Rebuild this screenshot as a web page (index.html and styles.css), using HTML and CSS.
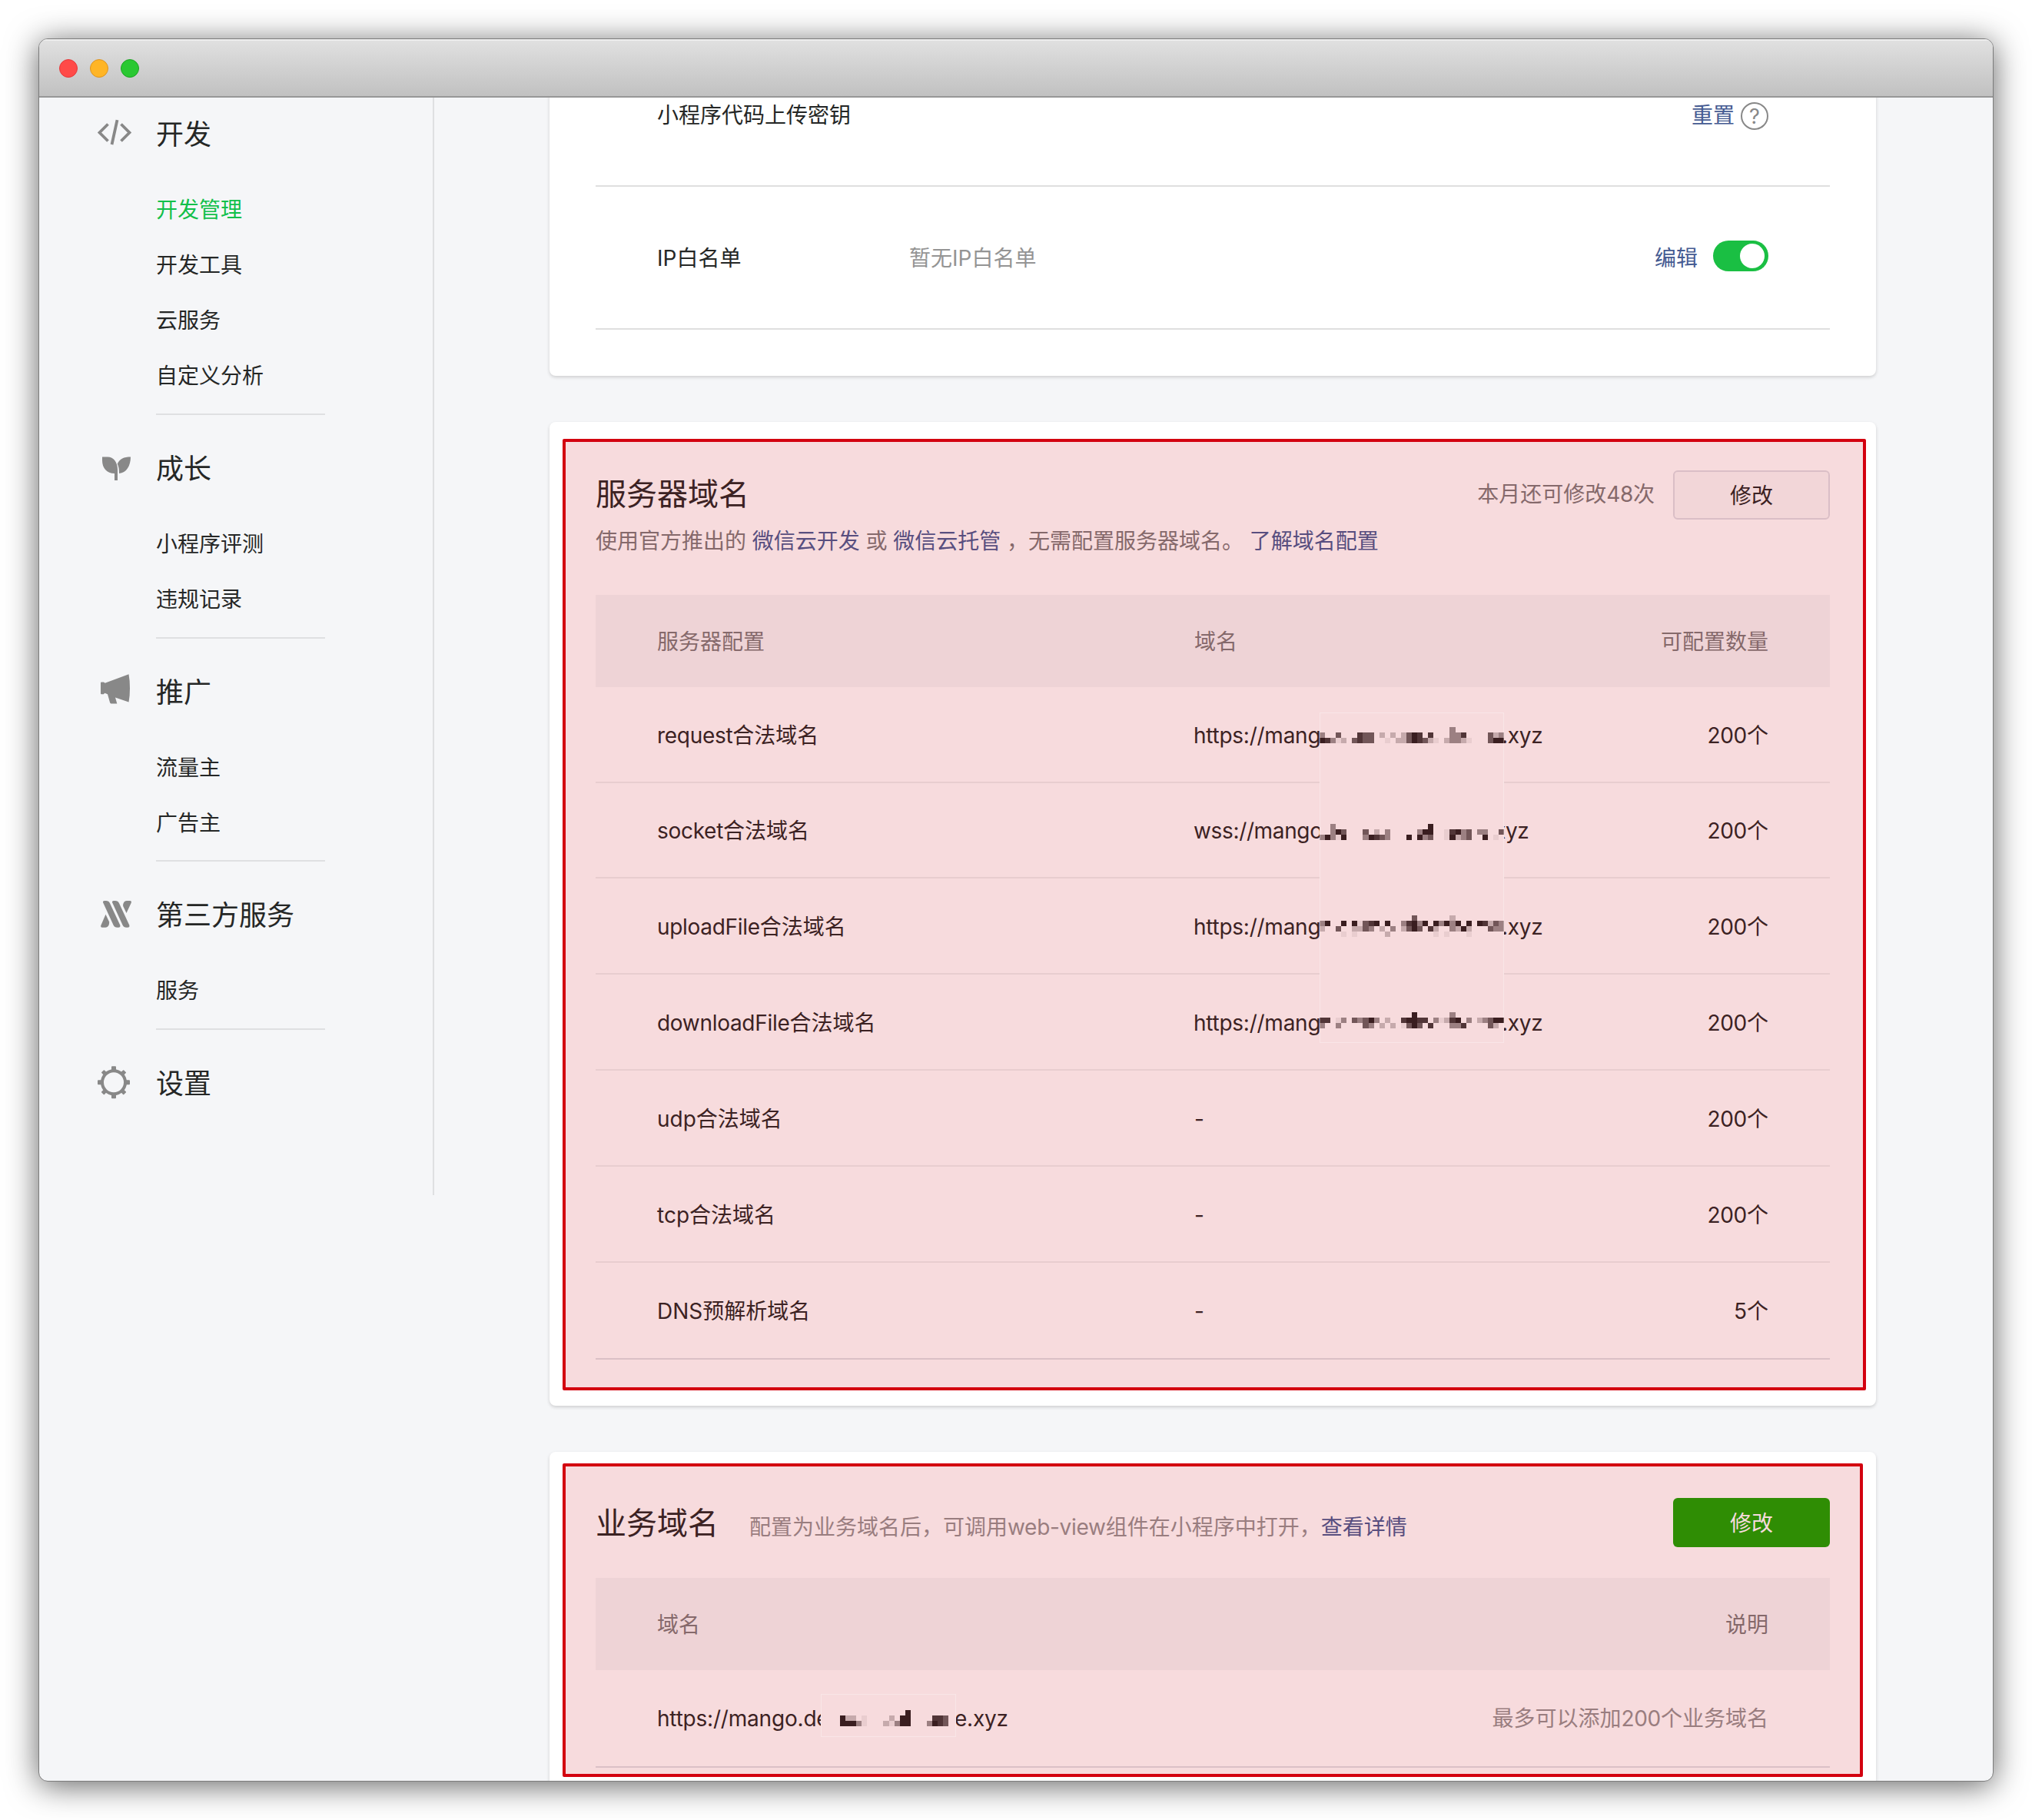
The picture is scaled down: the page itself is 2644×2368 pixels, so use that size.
FILE: index.html
```html
<!DOCTYPE html>
<html lang="zh-CN">
<head>
<meta charset="utf-8">
<title>开发管理</title>
<link rel="stylesheet" href="styles.css">
</head>
<body>
<div class="window">
  <header class="titlebar">
    <span class="dot dot-close"></span>
    <span class="dot dot-min"></span>
    <span class="dot dot-max"></span>
  </header>
  <div class="body">
    <nav class="sidebar">
      <section class="group">
        <h2 class="group-title">
          <svg class="icon" viewBox="0 0 48 48"><path d="M16.5 11.5 5.5 22.5 16.5 33.5M33.5 11.5 44.5 22.5 33.5 33.5M28.5 6.2 21.5 38" fill="none" stroke="#888" stroke-width="3.8"/></svg>
          开发
        </h2>
        <ul class="menu">
          <li class="active">开发管理</li>
          <li>开发工具</li>
          <li>云服务</li>
          <li>自定义分析</li>
        </ul>
      </section>
      <section class="group">
        <h2 class="group-title">
          <svg class="icon" viewBox="0 0 48 48"><path d="M9 9.6H16C24 9.6 29 17 29 26V40H25V31C15 31 9 24 9 14ZM46 9.6C46 21 40.500 30.500 31 31C31 26 30.500 22 28.700 18.600C32 12 37 9.600 46 9.600Z" fill="#888"/></svg>
          成长
        </h2>
        <ul class="menu">
          <li>小程序评测</li>
          <li>违规记录</li>
        </ul>
      </section>
      <section class="group">
        <h2 class="group-title">
          <svg class="icon" viewBox="0 0 48 48"><path d="M7 12.300Q7 11.500 8 11.500H10.500Q11.500 11.500 12.500 12.800L43.500 1.200Q45 9 45 19.500T43.500 37.600L26 31.500L28.300 39.400H20.500Q19.500 39.400 19.100 38.300L16 27.300L12.300 25.700L11.300 26.800Q10.800 27.300 10 27.300H8Q7 27.300 7 26.500Z" fill="#888"/></svg>
          推广
        </h2>
        <ul class="menu">
          <li>流量主</li>
          <li>广告主</li>
        </ul>
      </section>
      <section class="group">
        <h2 class="group-title">
          <svg class="icon" viewBox="0 0 48 48"><g fill="#888"><path d="M10.200 8.500Q9.300 6 12 6H14Q17.500 6 19 9.200L32.200 37.500Q33.200 40.700 30 40.700H28.500Q25 40.700 23.500 37.500Z"/><path d="M22.200 8.500Q21.300 6 24 6H26Q29.500 6 31 9.200L44.200 37.500Q45.200 40.700 42 40.700H40.500Q37 40.700 35.500 37.500Z"/><path d="M13.500 23.800L18 33.200Q18.500 35.500 17.600 37.500Q16 40.700 13 40.700H9Q6.500 40.500 7.300 38Z"/><path d="M40.500 22L36.200 13Q35.800 11 36.600 9.200Q38 6 41 6H45Q47.600 6.200 46.700 8.700Z"/></g></svg>
          第三方服务
        </h2>
        <ul class="menu">
          <li>服务</li>
        </ul>
      </section>
      <section class="group">
        <h2 class="group-title">
          <svg class="icon" viewBox="0 0 48 48"><g transform="translate(24 23.200)" fill="#888"><circle r="15" fill="none" stroke="#888" stroke-width="4"/><rect x="-3" y="-21" width="6" height="6" rx="1"/><rect x="-3" y="15" width="6" height="6" rx="1"/><rect x="-21" y="-3" width="6" height="6" rx="1"/><rect x="15" y="-3" width="6" height="6" rx="1"/><g transform="rotate(45)"><rect x="-2.600" y="-20.500" width="5.200" height="5" rx=".8"/><rect x="-2.600" y="15.500" width="5.200" height="5" rx=".8"/><rect x="-20.500" y="-2.600" width="5" height="5.200" rx=".8"/><rect x="15.500" y="-2.600" width="5" height="5.200" rx=".8"/></g></g></svg>
          设置
        </h2>
      </section>
    </nav>

    <main class="main">
      <section class="card card-settings">
        <div class="setting">
          <span class="setting-name">小程序代码上传密钥</span>
          <span class="setting-value"></span>
          <a class="link">重置</a>
          <span class="help">?</span>
        </div>
        <div class="setting">
          <span class="setting-name">IP白名单</span>
          <span class="setting-value">暂无IP白名单</span>
          <a class="link">编辑</a>
          <span class="switch"><span class="knob"></span></span>
        </div>
      </section>

      <section class="card card-server">
        <div class="card-head">
          <h3 class="card-title">服务器域名</h3>
          <span class="quota">本月还可修改<span class="en">48</span>次</span>
          <button class="btn">修改</button>
        </div>
        <p class="card-desc">使用官方推出的 <a class="link">微信云开发</a> 或 <a class="link">微信云托管</a> ，无需配置服务器域名。 <a class="link">了解域名配置</a></p>
        <div class="table">
          <div class="row thead"><span>服务器配置</span><span>域名</span><span class="num">可配置数量</span></div>
          <div class="row"><span><span class="en">request</span>合法域名</span><span class="url"><span class="url-start">https://mang</span><span>.xyz</span></span><span class="num"><span class="en">200</span>个</span></div>
          <div class="row"><span><span class="en">socket</span>合法域名</span><span class="url url-wss"><span class="url-start">wss://mango</span><span>xyz</span></span><span class="num"><span class="en">200</span>个</span></div>
          <div class="row"><span><span class="en">uploadFile</span>合法域名</span><span class="url"><span class="url-start">https://mang</span><span>.xyz</span></span><span class="num"><span class="en">200</span>个</span></div>
          <div class="row"><span><span class="en">downloadFile</span>合法域名</span><span class="url"><span class="url-start">https://mang</span><span>.xyz</span></span><span class="num"><span class="en">200</span>个</span></div>
          <div class="row"><span>udp合法域名</span><span>-</span><span class="num"><span class="en">200</span>个</span></div>
          <div class="row"><span>tcp合法域名</span><span>-</span><span class="num"><span class="en">200</span>个</span></div>
          <div class="row"><span>DNS预解析域名</span><span>-</span><span class="num">5个</span></div>
        </div>
        <svg class="mosaic mosaic-server" viewBox="0 0 240 430" shape-rendering="crispEdges">
          <rect width="240" height="430" fill="#fff"/>
          <g transform="translate(0 18.500) scale(7.060)">
            <path class="k5" d="M0 2.500h1M17 2.500h1M32 2.500h2M17 1.500h1"/>
            <path class="k4" d="M1 2.500h1M7 1.500h1M7 2.500h1M18 1.500h1M18 2.500h1M20 1.500h1M26 1.500h1"/>
            <path class="k3" d="M8 1.500h2M16 1.500h1M16 2.500h1M19 2.500h1M31 1.500h1M31 2.500h1M6 2.500h1M8 2.500h2M3 1.500h1"/>
            <path class="k2" d="M24 .5h1M0 1.500h1M33 1.500h1M24 1.500h2M2 2.500h1M24 2.500h2"/>
            <path class="k1" d="M11 1.500h1M13 1.500h1M15 1.500h1M32 1.500h1M4 2.500h1M14 2.500h2M20 2.500h1M23 2.500h1M26 2.500h1"/>
            <path class="k0" d="M3 2.500h1M12 2.500h1M21 2.500h1M27 2.500h1"/>
          </g>
          <g transform="translate(0 144.500) scale(7.060)">
            <path class="k5" d="M20 .5h1M3 1.500h1M19 1.500h2M25 1.500h1M1 2.500h1M4 2.500h1M9 2.500h1M16 2.500h1M18 2.500h1M24 2.500h1M30 2.500h1"/>
            <path class="k4" d="M24 1.500h1M10 2.500h1"/>
            <path class="k3" d="M4 1.500h1M8 1.500h1M27 1.500h1M33 1.500h1M11 2.500h1M20 2.500h1M27 2.500h1"/>
            <path class="k2" d="M2 .5h1M2 1.500h1M12 1.500h1M18 1.500h1M26 1.500h1M29 1.500h2M0 2.500h1M2 2.500h1M8 2.500h1M12 2.500h1M19 2.500h1M26 2.500h1"/>
            <path class="k1" d="M10 1.500h1M25 2.500h1"/>
            <path class="k0" d="M23 1.500h1M3 2.500h1M23 2.500h1M32 2.500h1"/>
          </g>
          <g transform="translate(0 263.500) scale(7.060)">
            <path class="k5" d="M1 1.500h1M4 1.500h1M6 1.500h1M10 1.500h1M12 1.500h1M17 1.500h1M19 1.500h1M21 1.500h1M23 1.500h1M25 1.500h1M27 1.500h1M29 1.500h1M17 2.500h1M26 2.500h1"/>
            <path class="k4" d="M9 1.500h1M16 1.500h1M30 1.500h1M20 2.500h1"/>
            <path class="k3" d="M17 .5h1M8 1.500h1M32 1.500h1M3 2.500h1M8 2.500h1M16 2.500h1M18 2.500h1M31 2.500h1"/>
            <path class="k2" d="M0 1.500h1M15 1.500h1M18 1.500h1M22 1.500h1M24 1.500h1M33 1.500h1M9 2.500h1M13 2.500h1M24 2.500h1M32 2.500h2"/>
            <path class="k1" d="M24 .5h1M31 1.500h1M0 2.500h1M6 2.500h2M11 2.500h1M15 2.500h1M21 2.500h1M25 2.500h1M27 2.500h1M12 3.500h1"/>
            <path class="k0" d="M7 1.500h1M4 3.500h1M6 3.500h1M21 3.500h1M23 3.500h1M27 3.500h1"/>
          </g>
          <g transform="translate(0 390) scale(7.060)">
            <path class="k5" d="M17 .5h1M9 1.500h1M16 1.500h2M25 1.500h1M32 1.500h2M17 2.500h1"/>
            <path class="k4" d="M0 1.500h2M15 1.500h1M18 1.500h2M24 1.500h1M20 2.500h1M26 2.500h1"/>
            <path class="k3" d="M6 1.500h1M8 1.500h1M31 1.500h1M8 2.500h1M16 2.500h1M18 2.500h1M31 2.500h1"/>
            <path class="k2" d="M24 .5h1M4 1.500h1M7 1.500h1M10 1.500h1M21 1.500h1M27 1.500h1M30 1.500h1M0 2.500h1M3 2.500h1M9 2.500h1M24 2.500h2"/>
            <path class="k1" d="M12 1.500h1M23 1.500h1M29 1.500h1M11 2.500h1M13 2.500h1M32 2.500h1"/>
            <path class="k0" d="M3 1.500h1M22 1.500h1M15 2.500h1"/>
          </g>
        </svg>
        <div class="annotation annotation-server"></div>
        <div class="mosaic mosaic-server mosaic-edge"></div>
      </section>

      <section class="card card-business">
        <div class="card-head">
          <h3 class="card-title">业务域名</h3>
          <p class="card-note">配置为业务域名后，可调用<span class="en">web-view</span>组件在小程序中打开，<a class="link">查看详情</a></p>
          <button class="btn btn-primary">修改</button>
        </div>
        <div class="table">
          <div class="row thead"><span>域名</span><span></span><span class="num">说明</span></div>
          <div class="row"><span class="url url-business"><span class="url-start">https://mango.de</span><span>e.xyz</span></span><span class="num muted">最多可以添加<span class="en">200</span>个业务域名</span></div>
        </div>
        <svg class="mosaic mosaic-business" viewBox="0 0 176 56" shape-rendering="crispEdges">
          <rect width="176" height="56" fill="#fff"/>
          <g transform="translate(25 21) scale(7.060)">
            <path class="k5" d="M12 .5h1M0 1.500h1M11 1.500h2M0 2.500h3M11 2.500h2M17 2.500h1"/>
            <path class="k4" d="M17 1.500h2M18 2.500h1"/>
            <path class="k3" d="M19 1.500h1M19 2.500h1"/>
            <path class="k2" d="M3 2.500h1M10 2.500h1M16 2.500h1"/>
            <path class="k1" d="M1 1.500h2M9 1.500h1M8 2.500h1"/>
            <path class="k0" d="M4 1.500h1M4 2.500h1M9 2.500h1"/>
          </g>
        </svg>
        <div class="annotation annotation-business"></div>
        <div class="mosaic mosaic-business mosaic-edge"></div>
      </section>
    </main>
  </div>
</div>
</body>
</html>
```

FILE: styles.css
```css
* { box-sizing: border-box; }

body {
  margin: 0;
  padding: 50px;
  height: 2368px;
  overflow: hidden;
  background: #fff;
  color: #252726;
  font: 28px/40px Inter, "Noto Sans CJK SC", sans-serif;
}

h2, h3, p, ul { margin: 0; padding: 0; font-weight: 400; }
li { list-style: none; }
.en { letter-spacing: -.3px; }

.window {
  width: 2544px;
  height: 2268px;
  border: 1px solid #7c7c7c;
  border-radius: 12px;
  overflow: hidden;
  background: #f5f6f8;
  box-shadow: 0 5px 42px rgba(0, 0, 0, .62);
}

.titlebar {
  display: flex;
  align-items: center;
  gap: 16px;
  height: 76px;
  padding: 0 26px;
  border-top: 2px solid #eee;
  border-bottom: 2px solid #979797;
  background: linear-gradient(#e0e0e0, #c1c1c1);
}
.dot { width: 24px; height: 24px; border-radius: 50%; border: 1px solid; }
.dot-close { background: #ff4a48; border-color: #e5383a; }
.dot-min { background: #ffb526; border-color: #de9420; }
.dot-max { background: #2ac832; border-color: #1ea323; }

.body { display: flex; height: 2190px; overflow: hidden; }

.sidebar {
  flex: none;
  width: 514px;
  height: 1428px;
  padding: 23.400px 0 0 73px;
  border-right: 2px solid #dfe0e2;
}
.group + .group { padding-top: 45px; }
.group-title {
  display: flex;
  align-items: center;
  gap: 31px;
  height: 48px;
  padding-top: 2px;
  font-size: 36px;
  line-height: 48px;
}
.icon { flex: none; width: 48px; height: 48px; margin-bottom: 2px; }
.menu {
  width: 220px;
  margin: 39px 0 0 79px;
  padding-bottom: 12.600px;
  border-bottom: 2px solid #dfe0e2;
}
.menu li { line-height: 72px; }
.menu .active { color: #12c04a; }

.main {
  display: flex;
  flex-direction: column;
  flex: none;
  gap: 60px;
  width: 1726px;
  margin-left: 150px;
}
.card {
  position: relative;
  flex: none;
  padding: 0 60px;
  border-radius: 8px;
  background: #fff;
  box-shadow: 0 2px 4px rgba(0, 0, 0, .16);
}
.card-settings { margin-top: -70px; height: 432px; }
.card-server { height: 1280px; padding-top: 63px; }
.card-business { height: 500px; padding-top: 60px; }

.setting {
  display: flex;
  align-items: center;
  height: 186px;
  padding: 2px 80px 0;
  border-bottom: 2px solid #dfdfdf;
}
.setting-name { width: 328px; }
.setting-value { flex: 1; color: #949494; }
.link { color: #455b92; }
.help {
  width: 36px;
  height: 36px;
  margin-top: 2px;
  margin-left: 8px;
  border: 2px solid #888;
  border-radius: 50%;
  color: #888;
  font-size: 27px;
  line-height: 33px;
  text-align: center;
}
.switch {
  display: flex;
  justify-content: flex-end;
  width: 72px;
  height: 40px;
  margin-left: 20px;
  margin-bottom: 6px;
  padding: 4px 5px;
  border-radius: 20px;
  background: #1abf43;
}
.knob { width: 32px; height: 32px; border-radius: 50%; background: #fff; }

.card-head { display: flex; align-items: center; height: 64px; }
.card-title { font-size: 40px; line-height: 60px; }
.card-server .card-title { margin-bottom: 3px; }
.card-business .card-title { margin-top: 2px; }
.quota { margin-left: auto; margin-right: 24px; color: #7a7a7a; margin-bottom: 3px; }
.card-note { flex: 1; margin: 11px 0 0 40px; color: #929292; }
.card-desc { margin-top: 8px; color: #7a7a7a; white-space: nowrap; letter-spacing: -.02px; }
.btn {
  width: 204px;
  height: 64px;
  padding: 2px 0 0;
  border: 2px solid #dedee4;
  border-radius: 6px;
  background: #fafafa;
  color: inherit;
  font: inherit;
}
.btn-primary { border: 0; background: #16a402; color: #fff; }

.table { margin-top: 50px; }
.card-business .table { margin-top: 40px; }
.row {
  display: grid;
  grid-template-columns: 699px 1fr auto;
  align-items: center;
  height: 125px;
  padding: 2px 80px 0;
  border-bottom: 2px solid #eeefef;
}
.row.thead {
  height: 120px;
  border: 0;
  background: #f5f6f7;
  color: #7a7a7a;
}
.card-server .row:nth-child(3) { height: 124px; }
.row:last-child { border-color: #dfe0e4; }
.card-server .row:last-child { height: 126px; }
.card-business .row:last-child { height: 127px; padding-top: 1px; grid-template-columns: 1fr auto; }
.num { text-align: right; }
.muted { color: #929292; }

.url { display: flex; margin-left: -1px; white-space: nowrap; letter-spacing: -.25px; }
.url-start { width: 401px; }
.url-wss { letter-spacing: -.35px; }
.url-wss .url-start { width: 391px; }
.url-business { margin-left: 0; letter-spacing: -.2px; }
.url-business .url-start { width: 387px; }

.mosaic { position: absolute; }
.mosaic-server { left: 1001.500px; top: 378px; width: 240px; height: 430px; }
.mosaic-business { left: 353px; top: 315px; width: 176px; height: 56px; }
.mosaic path { fill: none; stroke: #222; stroke-width: 1; }
.mosaic-edge { border: 1px solid rgba(255, 255, 255, .3); }
.k4 { stroke-opacity: .88; }
.k3 { stroke-opacity: .7; }
.k2 { stroke-opacity: .48; }
.k1 { stroke-opacity: .26; }
.k0 { stroke-opacity: .07; }

.annotation {
  position: absolute;
  border: 4px solid #d3000f;
  border-radius: 2px;
  background: rgba(203, 8, 18, .147);
}
.annotation-server { left: 17px; top: 22px; width: 1696px; height: 1238px; }
.annotation-business { left: 17px; top: 15px; width: 1692px; height: 408px; }
```
